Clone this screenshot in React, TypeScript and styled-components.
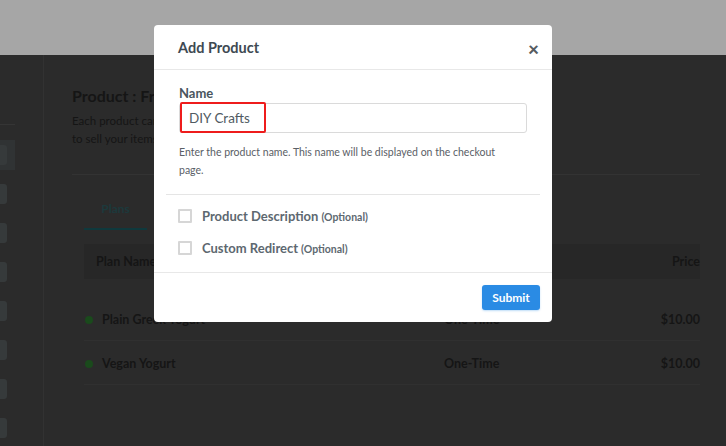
import React from 'react'
import styled, { createGlobalStyle } from 'styled-components'

const GlobalStyle = createGlobalStyle`
  html, body {
    margin: 0;
    padding: 0;
    background: #2b2b2b;
    font-family: Lato, "Noto Sans", Arial, sans-serif;
  }
  * {
    box-sizing: border-box;
  }
`

const Page = styled.div`
  position: relative;
  width: 726px;
  height: 446px;
  overflow: hidden;
  background: #2b2b2b;
  display: flex;
  flex-direction: column;
`

const TopBar = styled.div`
  height: 55px;
  flex-shrink: 0;
  background: #a6a6a6;
`

const Body = styled.div`
  flex: 1;
  display: flex;
`

const Sidebar = styled.nav`
  width: 44px;
  flex-shrink: 0;
  border-right: 1px solid #323232;
  padding-top: 69px;
  display: flex;
  flex-direction: column;
  gap: 9px;
`

const SideDivider = styled.div`
  width: 15px;
  height: 1px;
  background: #353535;
  margin-bottom: 6px;
`

const NavItem = styled.div<{ $active?: boolean }>`
  width: 15px;
  height: 30px;
  display: flex;
  align-items: center;
  background: ${({ $active }) => ($active ? '#303334' : 'transparent')};
`

const NavIcon = styled.span`
  width: 7px;
  height: 20px;
  border-radius: 0 3px 3px 0;
  background: #363a3b;
`

const Main = styled.main`
  flex: 1;
  padding: 31px 26px 0 28px;
  display: flex;
  flex-direction: column;
  color: #151515;
`

const Title = styled.h1`
  margin: 0;
  font-size: 16px;
  font-weight: 700;
  line-height: 20px;
`

const Lead = styled.p`
  margin: 6px 0 0;
  font-size: 11.5px;
  line-height: 18px;
`

const Rule = styled.div`
  height: 1px;
  background: #333333;
  margin-top: 26px;
`

const Tabs = styled.div`
  margin: 26px 0 0 12px;
  display: flex;
`

const Tab = styled.div<{ $active?: boolean }>`
  width: 63px;
  padding-bottom: 12px;
  text-align: center;
  font-size: 12px;
  line-height: 15px;
  font-weight: 700;
  color: #1c393c;
  border-bottom: 2px solid ${({ $active }) => ($active ? '#0f393d' : 'transparent')};
`

const Table = styled.div`
  margin: 14px 0 0 12px;
  display: flex;
  flex-direction: column;
`

const HeadRow = styled.div`
  height: 35px;
  display: grid;
  grid-template-columns: 348px 1fr auto;
  align-items: center;
  padding: 0 0 0 12px;
  background: #272727;
  font-size: 12.5px;
  font-weight: 700;
  margin-bottom: 18px;
`

const Row = styled.div`
  height: 44px;
  display: grid;
  grid-template-columns: 360px 1fr auto;
  align-items: center;
  border-bottom: 1px solid #303030;
  font-size: 12.5px;
  font-weight: 700;
  padding-top: 2px;
`

const PlanName = styled.div`
  display: flex;
  align-items: center;
  gap: 9px;
  padding-left: 1px;
`

const Dot = styled.span`
  width: 8px;
  height: 8px;
  border-radius: 50%;
  background: #1a4a1c;
`

const Price = styled.div`
  text-align: right;
`

/* modal */

const Modal = styled.div`
  position: absolute;
  left: 154px;
  top: 25px;
  width: 398px;
  height: 297px;
  background: #ffffff;
  border-radius: 4px;
  display: flex;
  flex-direction: column;
`

const ModalHeader = styled.div`
  height: 45px;
  padding: 0 13px 0 24px;
  display: flex;
  align-items: center;
  justify-content: space-between;
  border-bottom: 1px solid #e8e8e8;
`

const ModalTitle = styled.h2`
  margin: 0;
  font-size: 14.5px;
  font-weight: 700;
  color: #3e4952;
`

const Close = styled.span`
  font-size: 19px;
  font-weight: 900;
  color: #555b60;
  line-height: 1;
  margin-top: 2px;
`

const ModalBody = styled.div`
  padding: 0 12px;
  flex: 1;
`

const Field = styled.div`
  padding: 15px 13px 15px;
  border-bottom: 1px solid #e5e5e5;
`

const Label = styled.label`
  display: block;
  font-size: 13px;
  font-weight: 700;
  color: #4a555e;
  line-height: 16px;
`

const InputWrap = styled.div`
  position: relative;
  margin-top: 2px;
`

const Input = styled.div`
  height: 30px;
  border: 1px solid #dadada;
  border-radius: 3px;
  display: flex;
  align-items: center;
  padding-left: 9px;
  font-size: 13.5px;
  color: #505a62;
`

const Highlight = styled.span`
  position: absolute;
  left: 1px;
  top: -1px;
  width: 86px;
  height: 31px;
  border: 2px solid #ee1c1c;
  border-radius: 2px;
`

const Help = styled.p`
  margin: 10px 0 0;
  font-size: 10.5px;
  line-height: 18px;
  color: #5a6066;
`

const Options = styled.div`
  padding: 14px 12px 8px;
  display: flex;
  flex-direction: column;
  gap: 18px;
`

const Option = styled.label`
  display: flex;
  align-items: center;
  gap: 10px;
  font-size: 13px;
  font-weight: 700;
  color: #5d6870;
  height: 14px;
`

const Box = styled.span`
  width: 14px;
  height: 14px;
  border: 2px solid #d6d6d6;
  border-radius: 1px;
  flex-shrink: 0;
`

const Optional = styled.small`
  font-size: 10.5px;
  margin-left: 3px;
`

const ModalFooter = styled.div`
  height: 50px;
  border-top: 1px solid #e8e8e8;
  display: flex;
  align-items: center;
  justify-content: flex-end;
  padding: 0 12px 0;
`

const Submit = styled.button`
  width: 58px;
  height: 25px;
  border: none;
  border-radius: 3px;
  background: #2a8be4;
  color: #ffffff;
  font-family: inherit;
  font-size: 12px;
  font-weight: 700;
  box-shadow: 0 1px 2px rgba(42, 139, 228, 0.3);
`

const plans = [
  { name: 'Plain Greek Yogurt', type: 'One-Time', price: '$10.00' },
  { name: 'Vegan Yogurt', type: 'One-Time', price: '$10.00' },
]

export default function App() {
  return (
    <Page>
      <GlobalStyle />
      <TopBar />
      <Body>
        <Sidebar>
          <SideDivider />
          {Array.from({ length: 8 }).map((_, i) => (
            <NavItem key={i} $active={i === 0}>
              <NavIcon />
            </NavItem>
          ))}
        </Sidebar>
        <Main>
          <Title>Product : Frozen Yogurt</Title>
          <Lead>
            Each product can have multiple plans. Create plans
            <br />
            to sell your items at different prices.
          </Lead>
          <Rule />
          <Tabs>
            <Tab $active>Plans</Tab>
          </Tabs>
          <Table>
            <HeadRow>
              <span>Plan Name</span>
              <span>Type</span>
              <Price>Price</Price>
            </HeadRow>
            {plans.map((p) => (
              <Row key={p.name}>
                <PlanName>
                  <Dot />
                  {p.name}
                </PlanName>
                <span>{p.type}</span>
                <Price>{p.price}</Price>
              </Row>
            ))}
          </Table>
        </Main>
      </Body>

      <Modal>
        <ModalHeader>
          <ModalTitle>Add Product</ModalTitle>
          <Close>×</Close>
        </ModalHeader>
        <ModalBody>
          <Field>
            <Label>Name</Label>
            <InputWrap>
              <Input>DIY Crafts</Input>
              <Highlight />
            </InputWrap>
            <Help>
              Enter the product name. This name will be displayed on the checkout
              <br />
              page.
            </Help>
          </Field>
          <Options>
            <Option>
              <Box />
              <span>
                Product Description<Optional>(Optional)</Optional>
              </span>
            </Option>
            <Option>
              <Box />
              <span>
                Custom Redirect<Optional>(Optional)</Optional>
              </span>
            </Option>
          </Options>
        </ModalBody>
        <ModalFooter>
          <Submit>Submit</Submit>
        </ModalFooter>
      </Modal>
    </Page>
  )
}
